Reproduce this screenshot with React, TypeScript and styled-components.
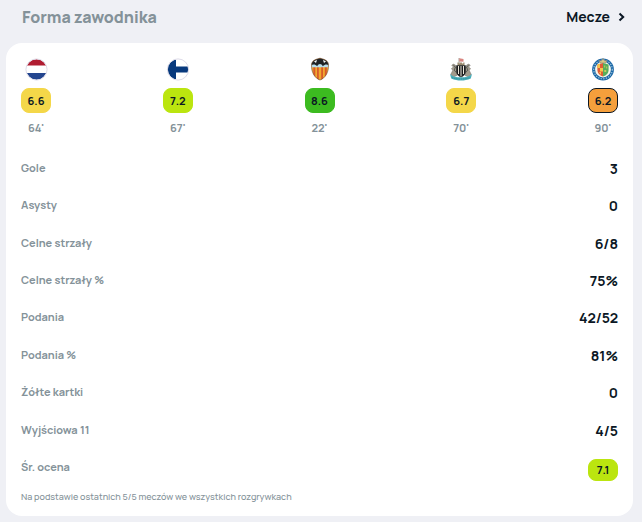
import React from 'react';
import styled, { createGlobalStyle } from 'styled-components';

const GlobalStyle = createGlobalStyle`
  * { box-sizing: border-box; }
  body {
    margin: 0;
    background: #eff0f5;
    color: #0b1724;
    font-family: Manrope, Inter, 'Noto Sans', sans-serif;
  }
`;

const Page = styled.main`
  padding: 0 9px 6px 6px;
`;

const Header = styled.header`
  display: flex;
  align-items: center;
  justify-content: space-between;
  height: 43px;
  padding: 0 7px 9px 16px;
`;

const Title = styled.h2`
  margin: 0;
  color: #849299;
  font-size: 16px;
  line-height: 24px;
  font-weight: 800;
`;

const MoreLink = styled.a`
  display: flex;
  align-items: center;
  gap: 7px;
  color: inherit;
  font-size: 14px;
  line-height: 20px;
  font-weight: 700;
  text-decoration: none;
`;

const Card = styled.section`
  padding: 14px 15px 11px;
  border-radius: 16px;
  background: #fff;
`;

const MatchList = styled.ul`
  display: flex;
  justify-content: space-between;
  margin: 0;
  padding: 0;
  list-style: none;
`;

const Match = styled.li`
  display: flex;
  flex-direction: column;
  align-items: center;
  width: 30px;
`;

const Crest = styled.svg`
  display: block;
  width: 24px;
  height: 24px;
  margin-bottom: 7px;
`;

const Rating = styled.span<{ $color: string; $latest?: boolean; $compact?: boolean }>`
  display: flex;
  align-items: center;
  justify-content: center;
  width: 30px;
  height: ${(p) => (p.$compact ? 22 : 25)}px;
  margin-top: ${(p) => (p.$compact ? 4 : 0)}px;
  border: 1px solid ${(p) => (p.$latest ? '#0b1724' : p.$color)};
  border-radius: 8px;
  background: ${(p) => p.$color};
  font-size: 11px;
  line-height: 16px;
  font-weight: 700;
`;

const Minutes = styled.span`
  margin-top: 7px;
  color: #849299;
  font-size: 11px;
  line-height: 16px;
  font-weight: 700;
`;

const Stats = styled.dl`
  display: grid;
  grid-auto-rows: 1fr;
  min-height: 337px;
  margin: 14px 0 0;
`;

const Stat = styled.div`
  display: flex;
  align-items: center;
  justify-content: space-between;
`;

const StatName = styled.dt`
  padding-bottom: 2px;
  color: #849299;
  font-size: 11px;
  line-height: 16px;
  font-weight: 700;
`;

const StatValue = styled.dd`
  margin: 0;
  font-size: 14px;
  line-height: 20px;
  font-weight: 700;
`;

const Note = styled.p`
  margin: 2px 0 0;
  color: #849299;
  font-size: 9px;
  line-height: 16px;
  font-weight: 500;
`;

const Netherlands = () => (
  <Crest viewBox="0 0 24 24" role="img" aria-label="Holandia">
    <clipPath id="nl"><circle cx="12.5" cy="12.5" r="10.3" /></clipPath>
    <g clipPath="url(#nl)">
      <path fill="#fff" d="M0 0h24v24H0z" />
      <path fill="#b01c31" d="M0 0h24v8.6H0z" />
      <path fill="#24468f" d="M0 16h24v8H0z" />
    </g>
    <circle cx="12.5" cy="12.5" r="10.6" fill="none" stroke="#dedce9" />
  </Crest>
);

const Finland = () => (
  <Crest viewBox="0 0 24 24" role="img" aria-label="Finlandia">
    <clipPath id="fi"><circle cx="12" cy="12.5" r="10.3" /></clipPath>
    <g clipPath="url(#fi)">
      <path fill="#fff" d="M0 0h24v24H0z" />
      <path fill="#07397d" d="M1 1h9v23H1zM1 9.500h23v6H1z" />
    </g>
    <circle cx="12" cy="12.5" r="10.6" fill="none" stroke="#dedce9" />
  </Crest>
);

const Valencia = () => (
  <Crest viewBox="0 0 24 24" role="img" aria-label="Valencia">
    <clipPath id="va"><path d="M3.600 8C3.400 4 7 2.300 12 1.200 17 2.300 20.600 4 20.400 8c.5 7-3 13.200-8.400 15C6.600 21.200 3.100 15 3.600 8z" /></clipPath>
    <g clipPath="url(#va)">
      <path fill="#f0a92f" d="M3 1h18v22H3z" />
      <path fill="#d75a2a" d="M5.300 9h2v14h-2zM9 9h1.800v14H9zM13.200 9H15v14h-1.800zM16.800 9h2v14h-2z" />
      <path fill="#b9e0ee" d="M3 5h18v5.200H3z" />
      <path fill="#202326" d="M3 8.500V4l7-3h4l7 3v4.500c-2-1.700-4.200-1.500-6.200.8-.7-1.600-1.800-2.400-2.800-2.400s-2.100.8-2.800 2.400C7.200 7 5 6.800 3 8.500z" />
      <path fill="#f7fbfc" d="M6 4.300 9 3l-1 3zM15 3l3 1.300L16 6z" />
    </g>
    <path fill="none" stroke="#6b4a35" strokeWidth=".6" d="M3.600 8C3.400 4 7 2.300 12 1.200 17 2.300 20.600 4 20.400 8c.5 7-3 13.200-8.400 15C6.600 21.200 3.100 15 3.600 8z" />
  </Crest>
);

const Newcastle = () => (
  <Crest viewBox="0 0 24 24" role="img" aria-label="Newcastle United">
    <path fill="#706658" d="M9.700 1h.7v6h-.7z" />
    <path fill="#d98580" d="M10.300 1.300 14.500 2v2.700l-4.200-.3z" />
    <path fill="#97896c" d="M8.500 5.500h1.200v1h1.400v-1h1.800v1h1.400v-1h1.200v3h-7z" />
    <path fill="#a39c8d" stroke="#77736c" strokeWidth=".6" d="M6.500 8.200 4.200 7 2.800 8.600l1.800 1.200-2.200 2L4 13l-2.200 4.500 2.600 2.300 3.500-1.300V11zM17.500 8.200 19.800 7l1.400 1.600-1.800 1.200 2.200 2L20 13l2.200 4.500-2.600 2.300-3.500-1.300V11z" />
    <path fill="none" stroke="#4f524f" strokeWidth=".9" d="m4.500 8.500 2 1.500-1.300 3 2 2.500M19.500 8.500l-2 1.500 1.300 3-2 2.500" />
    <path fill="#1c1d1e" d="M7.300 8.300h9.400v6.500c0 3-2.300 4.400-4.700 5.800-2.400-1.400-4.700-2.800-4.700-5.800z" />
    <path stroke="#eee9dc" strokeWidth="1" d="M9.500 9v8M12 9v10.500M14.500 9v8" />
    <path fill="#4aafbb" d="M1 17c3 2.800 6.500 3.300 11 3.300S20 19.800 23 17l-1.200 4.500c-3.300 1.500-6.400 2-9.800 2s-6.500-.5-9.800-2z" />
    <path fill="none" stroke="#27717c" strokeWidth=".5" strokeDasharray="1.500 .7" d="M3 20.700c5.500 1.700 12.500 1.700 18 0" />
  </Crest>
);

const Getafe = () => (
  <Crest viewBox="0 0 24 24" role="img" aria-label="Getafe">
    <circle cx="12" cy="12.500" r="10.900" fill="#1c68a7" />
    <circle cx="12" cy="12.500" r="9.300" fill="none" stroke="#9cc3dc" strokeWidth="1.200" strokeDasharray="1.300 1.300" />
    <circle cx="12" cy="12.500" r="7.900" fill="#f6f5ea" />
    <path fill="#e05b34" d="M6.400 7.500 12 6v13.500c-3.500-1-5.600-3.200-5.600-6.500z" />
    <path fill="#f6c54a" d="M6.400 7.500 9 6.800V11H6.400zM9 11h3v3.500H9zM8 15h2v3z" />
    <path fill="#56ad5b" d="m12 6 5.600 1.500V13c0 3.300-2.100 5.500-5.600 6.500z" />
    <path fill="#c6c95c" d="M13.200 8.500h1v2h-1zM15.200 9.500h1v2h-1zM13.300 13h2v2h-2z" />
    <path fill="#d9c684" stroke="#75736a" strokeWidth=".5" d="m9 6-.6-3L10.300 4 12 1.400 13.700 4l1.900-1L15 6z" />
  </Crest>
);

const matches = [
  { Logo: Netherlands, rating: '6.6', minutes: "64'", color: '#f4d749' },
  { Logo: Finland, rating: '7.2', minutes: "67'", color: '#bbe50f' },
  { Logo: Valencia, rating: '8.6', minutes: "22'", color: '#3cbb20' },
  { Logo: Newcastle, rating: '6.7', minutes: "70'", color: '#f4d749' },
  { Logo: Getafe, rating: '6.2', minutes: "90'", color: '#f59f3c', latest: true },
];

const stats = [
  ['Gole', '3'],
  ['Asysty', '0'],
  ['Celne strzały', '6/8'],
  ['Celne strzały %', '75%'],
  ['Podania', '42/52'],
  ['Podania %', '81%'],
  ['Żółte kartki', '0'],
  ['Wyjściowa 11', '4/5'],
];

export default function App() {
  return (
    <>
      <GlobalStyle />
      <Page>
        <Header>
          <Title>Forma zawodnika</Title>
          <MoreLink href="#mecze">
            Mecze
            <svg width="9" height="10" viewBox="0 0 9 10" aria-hidden="true">
              <path d="M2.500 1.500 6.200 5 2.500 8.500" fill="none" stroke="currentColor" strokeWidth="2" />
            </svg>
          </MoreLink>
        </Header>
        <Card>
          <MatchList>
            {matches.map(({ Logo, rating, minutes, color, latest }) => (
              <Match key={rating}>
                <Logo />
                <Rating $color={color} $latest={latest}>{rating}</Rating>
                <Minutes>{minutes}</Minutes>
              </Match>
            ))}
          </MatchList>
          <Stats>
            {stats.map(([name, value]) => (
              <Stat key={name}>
                <StatName>{name}</StatName>
                <StatValue>{value}</StatValue>
              </Stat>
            ))}
            <Stat>
              <StatName>Śr. ocena</StatName>
              <StatValue>
                <Rating $color="#bbe50f" $compact>7.1</Rating>
              </StatValue>
            </Stat>
          </Stats>
          <Note>Na podstawie ostatnich 5/5 meczów we wszystkich rozgrywkach</Note>
        </Card>
      </Page>
    </>
  );
}
